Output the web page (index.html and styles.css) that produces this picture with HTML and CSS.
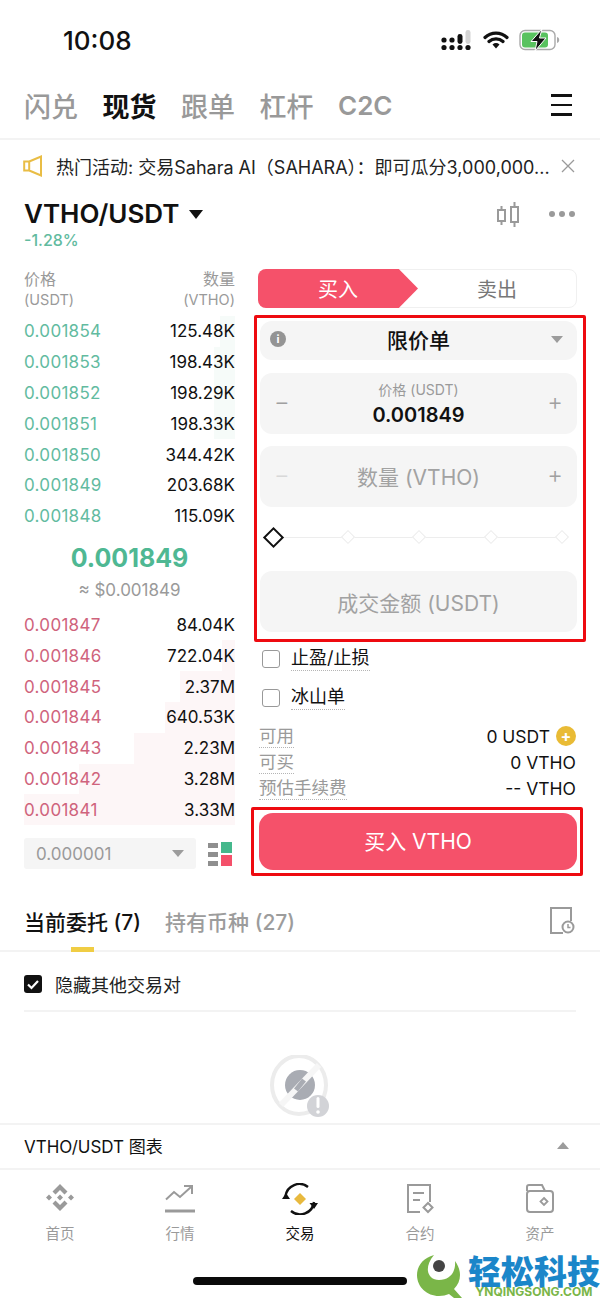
FILE: index.html
```html
<!DOCTYPE html>
<html lang="zh-CN">
<head>
    <meta charset="UTF-8">
    <meta name="viewport" content="width=device-width, initial-scale=1.0">
    <title>VTHO/USDT 现货交易</title>
    <link rel="stylesheet" href="styles.css">
</head>
<body>
<div class="page">
    <header class="status-bar">
        <span class="time">10:08</span>
        <div class="status-icons">
            <svg width="32" height="22" viewBox="0 0 32 22">
                <g fill="#111">
                    <circle cx="3" cy="11" r="2.600"/><circle cx="3" cy="18.500" r="2.600"/>
                    <circle cx="11" cy="11" r="2.600"/><circle cx="11" cy="18.500" r="2.600"/>
                    <rect x="16.500" y="5" width="5" height="10" rx="2.400"/><circle cx="19" cy="18.500" r="2.600"/>
                    <circle cx="27" cy="18.500" r="2.600"/>
                </g>
                <rect x="24.500" y="1" width="5" height="14" rx="2.400" fill="#d4d4d4"/>
            </svg>
            <svg width="26" height="20" viewBox="0 0 26 20">
                <path d="M2 7.500a16 16 0 0 1 22 0M6 11.500a10.500 10.500 0 0 1 14 0" fill="none" stroke="#111" stroke-width="3.200" stroke-linecap="round"/>
                <path d="M9.500 14.500a5.500 5.500 0 0 1 7 0L13 18.600z" fill="#111"/>
            </svg>
            <svg width="42" height="22" viewBox="0 0 42 22">
                <rect x="1" y="1.500" width="35" height="19" rx="5" fill="#fff" stroke="#a9a9a9" stroke-width="1.400"/>
                <rect x="3" y="3.500" width="26" height="15" rx="3" fill="#59c25f"/>
                <path d="M38 8v6c1.600-.4 2.200-1.600 2.200-3s-.6-2.600-2.200-3z" fill="#a9a9a9"/>
                <path d="M23 0 12 12.500h6L16 22l11-13h-6.500z" fill="#111" stroke="#fff" stroke-width="1"/>
            </svg>
        </div>
    </header>

    <nav class="top-tabs">
        <a>闪兑</a>
        <a class="active">现货</a>
        <a>跟单</a>
        <a>杠杆</a>
        <a class="latin">C2C</a>
        <span class="menu"><i></i><i></i><i></i></span>
    </nav>

    <div class="notice">
        <svg width="20" height="22" viewBox="0 0 20 22">
            <path d="M1.200 6.500h5v9h-5zM6.200 6.500l11.800-5v19l-11.800-5" fill="none" stroke="#e9bd45" stroke-width="2"/>
        </svg>
        <span class="notice-text">热门活动: 交易Sahara AI（SAHARA）：即可瓜分3,000,000...</span>
        <svg class="notice-close" width="14" height="14" viewBox="0 0 14 14">
            <path d="M1 1l12 12M13 1L1 13" stroke="#9a9a9a" stroke-width="1.300"/>
        </svg>
    </div>

    <section class="pair">
        <div class="pair-left">
            <div class="pair-name">VTHO/USDT <span class="caret-down"></span></div>
            <div class="pair-change">-1.28%</div>
        </div>
        <div class="pair-tools">
            <svg width="24" height="28" viewBox="0 0 24 28">
                <g fill="none" stroke="#9a9a9a" stroke-width="2">
                    <rect x="2" y="9" width="7" height="11"/><rect x="15" y="6" width="7" height="15"/>
                    <path d="M5.500 5v4M5.500 20v4M18.500 1v5M18.500 21v5"/>
                </g>
            </svg>
            <span class="dots"><i></i><i></i><i></i></span>
        </div>
    </section>

    <main class="trade">
        <section class="book">
            <div class="book-head">
                <div>价格<br><small>(USDT)</small></div>
                <div class="right">数量<br><small>(VTHO)</small></div>
            </div>
            <div class="book-rows bids">
                <div class="row"><span class="depth" style="width:7%"></span><span class="price">0.001854</span><span>125.48K</span></div>
                <div class="row"><span class="depth" style="width:10%"></span><span class="price">0.001853</span><span>198.43K</span></div>
                <div class="row"><span class="depth" style="width:10%"></span><span class="price">0.001852</span><span>198.29K</span></div>
                <div class="row"><span class="depth" style="width:10%"></span><span class="price">0.001851</span><span>198.33K</span></div>
                <div class="row"><span class="price">0.001850</span><span>344.42K</span></div>
                <div class="row"><span class="price">0.001849</span><span>203.68K</span></div>
                <div class="row"><span class="price">0.001848</span><span>115.09K</span></div>
            </div>
            <div class="mid">
                <div class="mid-price">0.001849</div>
                <div class="mid-usd">≈ $0.001849</div>
            </div>
            <div class="book-rows asks">
                <div class="row"><span class="price">0.001847</span><span>84.04K</span></div>
                <div class="row"><span class="depth" style="width:6%"></span><span class="price">0.001846</span><span>722.04K</span></div>
                <div class="row"><span class="depth" style="width:26%"></span><span class="price">0.001845</span><span>2.37M</span></div>
                <div class="row"><span class="depth" style="width:33%"></span><span class="price">0.001844</span><span>640.53K</span></div>
                <div class="row"><span class="depth" style="width:48%"></span><span class="price">0.001843</span><span>2.23M</span></div>
                <div class="row"><span class="depth" style="width:74%"></span><span class="price">0.001842</span><span>3.28M</span></div>
                <div class="row"><span class="depth" style="width:100%"></span><span class="price">0.001841</span><span>3.33M</span></div>
            </div>
            <div class="book-foot">
                <div class="step">0.000001<span class="caret-small"></span></div>
                <svg width="24" height="24" viewBox="0 0 24 24">
                    <g fill="#8f8f8f"><rect x="0" y="1" width="10" height="5"/><rect x="0" y="10" width="10" height="5"/><rect x="0" y="19" width="10" height="5"/></g>
                    <rect x="13" y="0" width="11" height="11" fill="#45b88c"/>
                    <rect x="13" y="13" width="11" height="11" fill="#f4506a"/>
                </svg>
            </div>
        </section>

        <section class="order">
            <div class="side-switch">
                <div class="side buy">买入</div>
                <div class="side sell">卖出</div>
            </div>
            <div class="highlight form-box">
                <div class="field type">
                    <span class="info">i</span>
                    <span>限价单</span>
                    <span class="caret-small"></span>
                </div>
                <div class="field stepper">
                    <span class="op">−</span>
                    <div class="stepper-mid">
                        <small>价格 (USDT)</small>
                        <strong>0.001849</strong>
                    </div>
                    <span class="op">+</span>
                </div>
                <div class="field stepper">
                    <span class="op faint">−</span>
                    <div class="placeholder">数量 (VTHO)</div>
                    <span class="op">+</span>
                </div>
                <div class="slider">
                    <i class="knob"></i><i></i><i></i><i></i><i></i>
                </div>
                <div class="field total placeholder">成交金额 (USDT)</div>
            </div>
            <label class="check first"><span class="box"></span><span class="dotted">止盈/止损</span></label>
            <label class="check"><span class="box"></span><span class="dotted">冰山单</span></label>
            <div class="info-rows">
                <div class="info-row"><span class="dotted">可用</span><span class="val">0 USDT <span class="plus">+</span></span></div>
                <div class="info-row"><span class="dotted">可买</span><span class="val">0 VTHO</span></div>
                <div class="info-row"><span class="dotted">预估手续费</span><span class="val">-- VTHO</span></div>
            </div>
            <div class="highlight buy-box">
                <button class="buy-btn">买入 VTHO</button>
            </div>
        </section>
    </main>

    <section class="orders">
        <div class="orders-tabs">
            <a class="active">当前委托 (7)</a>
            <a>持有币种 (27)</a>
            <svg class="history" width="26" height="28" viewBox="0 0 26 28">
                <path d="M14 26H2V1h20v13" fill="none" stroke="#9a9a9a" stroke-width="2"/>
                <circle cx="19" cy="20" r="5.500" fill="#fff" stroke="#9a9a9a" stroke-width="2"/>
                <path d="M19 17v3.500h2.500" fill="none" stroke="#9a9a9a" stroke-width="1.500"/>
            </svg>
        </div>
        <div class="hide-pairs">
            <span class="checked">
                <svg width="18" height="18" viewBox="0 0 18 18"><path d="M4 9.500l3.500 3.500L14 6" fill="none" stroke="#fff" stroke-width="2.200"/></svg>
            </span>
            隐藏其他交易对
        </div>
        <div class="empty">
            <svg width="62" height="64" viewBox="0 0 62 64">
                <ellipse cx="30" cy="30" rx="27" ry="29" fill="none" stroke="#ececec" stroke-width="4"/>
                <circle cx="31" cy="30" r="15" fill="#a9acb3"/>
                <path d="M12 50 50 10" stroke="#f6f6f6" stroke-width="6"/>
                <path d="M27 35 35 25" stroke="#a9acb3" stroke-width="5"/>
                <circle cx="49" cy="51" r="11" fill="#d2d3d7"/>
                <rect x="47.500" y="42" width="3" height="11" rx="1.500" fill="#fff"/>
                <circle cx="49" cy="57" r="1.800" fill="#fff"/>
            </svg>
        </div>
    </section>

    <div class="chart-bar">
        <span>VTHO/USDT 图表</span>
        <span class="caret-up"></span>
    </div>

    <nav class="bottom-nav">
        <a>
            <svg width="32" height="32" viewBox="0 0 32 32" fill="#9a9a9a">
                <path d="M16 1l7.500 7.500-3 3L16 7l-4.500 4.500-3-3zM5 11.500l3 3-3 3-3-3zM27 11.500l3 3-3 3-3-3zM16 11.500l3 3-3 3-3-3zM8.500 20.500l3-3L16 22l4.500-4.500 3 3L16 28z"/>
            </svg>
            <span>首页</span>
        </a>
        <a>
            <svg width="32" height="32" viewBox="0 0 32 32" fill="none" stroke="#9a9a9a" stroke-width="2">
                <path d="M2 16.500l8-7.500 6 5 11-10M20 3h8v8"/>
                <path d="M1 28h30" stroke-width="3"/>
            </svg>
            <span>行情</span>
        </a>
        <a class="active">
            <svg width="36" height="32" viewBox="0 0 36 32">
                <path d="M3.500 13A14 14 0 0 1 26 4M32 19A14 14 0 0 1 9 28" fill="none" stroke="#111" stroke-width="2.400"/>
                <path d="M0 14l4-6 4 6zM27.500 18l4.500 6 4-6z" fill="#111" transform="translate(0 2)"/>
                <path d="M18 10l6 6-6 6-6-6z" fill="#e8b93e"/>
            </svg>
            <span>交易</span>
        </a>
        <a>
            <svg width="32" height="32" viewBox="0 0 32 32" fill="none" stroke="#9a9a9a" stroke-width="2">
                <path d="M16 29H4V2h22v17"/>
                <path d="M9 10h11M9 17h7"/>
                <path d="M24 20l4.500 4.500L24 29l-4.500-4.500z"/>
            </svg>
            <span>合约</span>
        </a>
        <a>
            <svg width="32" height="32" viewBox="0 0 32 32" fill="none" stroke="#9a9a9a" stroke-width="2">
                <path d="M3 8V4a2 2 0 0 1 2-2h13l3 6"/>
                <rect x="3" y="8" width="26" height="21" rx="3"/>
                <path d="M20 15l3.500 3.500L20 22l-3.500-3.500z" stroke-width="1.800"/>
            </svg>
            <span>资产</span>
        </a>
    </nav>

    <div class="home-bar"></div>

    <div class="watermark">
        <svg width="46" height="44" viewBox="0 0 46 44">
            <path d="M17 1C6 4 0 12 0 21c0 12 10 21 22 21 4 0 7-1 10-2l5 4h8l-8-9c4-4 6-9 6-14 0-5-2-10-5-14 1 11-5 19-16 19C11 26 6 14 17 1z" fill="#7ab648"/>
            <circle cx="22" cy="12" r="6" fill="#444"/>
        </svg>
        <div class="wm-text">
            <b>轻松科技</b>
            <small>YNQINGSONG.COM</small>
        </div>
    </div>
</div>
</body>
</html>
```

FILE: styles.css
```css
:root {
    --text-color: #111111;
    --muted: #9a9a9a;
    --green: #62bb9f;
    --red: #cf637c;
    --buy: #f5516a;
    --field: #f5f5f5;
    --line: #f3f3f3;
    --highlight: #ee0a10;
}

* {
    box-sizing: border-box;
}

body {
    margin: 0;
    font-family: Inter, "Noto Sans CJK SC", sans-serif;
    color: var(--text-color);
    background: #ffffff;
}

.page {
    position: relative;
    width: 600px;
    height: 1298px;
    overflow: hidden;
}

.status-bar {
    display: flex;
    justify-content: space-between;
    align-items: center;
    height: 78px;
    padding: 2px 39px 0 63px;
}

.time {
    font-size: 26px;
    font-weight: 500;
}

.status-icons {
    display: flex;
    align-items: center;
    gap: 10px;
}

.top-tabs {
    display: flex;
    align-items: center;
    gap: 24.500px;
    height: 62px;
    padding: 0 28px 6px 24px;
    border-bottom: 2px solid var(--line);
    font-size: 27px;
    font-weight: 500;
    color: #999999;
}

.top-tabs .active {
    color: var(--text-color);
    font-weight: 700;
}

.top-tabs .latin {
    font-size: 26px;
    font-weight: 600;
}

.menu {
    display: flex;
    flex-direction: column;
    gap: 7px;
    margin-left: auto;
    width: 21px;
}

.menu i {
    display: block;
    height: 2.500px;
    background: var(--text-color);
}

.notice {
    display: flex;
    align-items: center;
    height: 49px;
    padding: 2px 25px 0 23px;
}

.notice-text {
    margin-left: 13px;
    font-size: 18px;
    color: #222222;
    white-space: nowrap;
    flex: 1;
}

.pair {
    display: flex;
    justify-content: space-between;
    padding: 9px 25px 0 24px;
    height: 78px;
}

.pair-name {
    font-size: 26px;
    font-weight: 600;
    line-height: 32px;
}

.caret-down {
    display: inline-block;
    margin-left: 3px;
    vertical-align: 4px;
    border: 7px solid transparent;
    border-top: 9px solid var(--text-color);
    border-bottom: 0;
}

.pair-change {
    font-size: 16px;
    font-weight: 500;
    color: var(--green);
}

.pair-tools {
    display: flex;
    align-items: flex-start;
    gap: 29px;
    padding-top: 3px;
}

.dots {
    display: flex;
    gap: 4px;
    padding-top: 10px;
}

.dots i {
    width: 6px;
    height: 6px;
    border-radius: 50%;
    background: var(--muted);
}

.trade {
    display: flex;
    height: 608px;
    padding-top: 2px;
}

.book {
    width: 251px;
    padding-left: 24px;
    padding-right: 16px;
}

.book-head {
    display: flex;
    justify-content: space-between;
    font-size: 16px;
    line-height: 20px;
    color: var(--muted);
}

.book-head small {
    font-size: 14.500px;
}

.book-head .right {
    text-align: right;
}

.book-rows {
    display: flex;
    flex-direction: column;
}

.bids {
    margin-top: 6px;
}

.row {
    position: relative;
    display: flex;
    justify-content: space-between;
    align-items: center;
    height: 30.800px;
    font-size: 17px;
}

.row span {
    position: relative;
}

.row .price {
    letter-spacing: 0.300px;
}

.row .depth {
    position: absolute;
    top: 0;
    right: 0;
    bottom: 0;
}

.bids .depth {
    background: #f6fbf9;
}

.asks .depth {
    background: #fdf6f7;
}

.bids .price {
    color: var(--green);
}

.asks .price {
    color: var(--red);
}

.mid {
    text-align: center;
    height: 78px;
    padding-top: 9px;
}

.mid-price {
    font-size: 25px;
    font-weight: 700;
    color: #4fb893;
    line-height: 34px;
}

.mid-usd {
    margin-top: 5px;
    font-size: 17px;
    color: var(--muted);
}

.book-foot {
    display: flex;
    justify-content: space-between;
    align-items: center;
    margin-top: 13px;
    padding-right: 3px;
}

.step {
    display: flex;
    justify-content: space-between;
    align-items: center;
    width: 172px;
    height: 31px;
    padding: 0 12px;
    background: var(--field);
    border-radius: 3px;
    font-size: 17px;
    color: var(--muted);
}

.caret-small {
    display: inline-block;
    border: 6px solid transparent;
    border-top: 7px solid #9c9c9c;
    border-bottom: 0;
}

.order {
    width: 349px;
    display: flex;
    flex-direction: column;
}

.side-switch {
    display: flex;
    flex: none;
    width: 319px;
    height: 39px;
    margin-left: 7px;
    border: 1px solid #f0f0f0;
    border-radius: 8px;
    font-size: 20px;
}

.side {
    display: flex;
    align-items: center;
    justify-content: center;
}

.buy {
    width: 160px;
    margin: -1px 0 -1px -1px;
    background: var(--buy);
    color: #ffffff;
    border-radius: 8px 0 0 8px;
    clip-path: polygon(0 0, 88% 0, 100% 50%, 88% 100%, 0 100%);
}

.sell {
    flex: 1;
    color: #777777;
}

.highlight {
    flex: none;
    border: 3px solid var(--highlight);
    border-radius: 2px;
}

.form-box {
    display: flex;
    flex-direction: column;
    width: 332px;
    height: 327px;
    margin: 7px 0 0 3px;
    padding: 3px 6px 6px 3px;
}

.field {
    display: flex;
    flex: none;
    align-items: center;
    justify-content: space-between;
    background: var(--field);
    border-radius: 12px;
}

.type {
    height: 39px;
    padding: 0 14px 3px 10px;
    font-size: 21px;
    font-weight: 500;
}

.info {
    display: flex;
    align-items: center;
    justify-content: center;
    width: 16px;
    height: 16px;
    border-radius: 50%;
    background: #949494;
    color: #ffffff;
    font-size: 11px;
    font-weight: 700;
}

.stepper {
    height: 61px;
    margin-top: 13px;
    padding: 0 14px;
}

.stepper + .stepper {
    margin-top: 12px;
}

.op {
    margin-bottom: 4px;
    font-size: 24px;
    font-weight: 300;
    color: #a0a0a0;
}

.op.faint {
    color: #d8d8d8;
}

.stepper-mid {
    display: flex;
    flex-direction: column;
    align-items: center;
    line-height: 1;
}

.stepper-mid small {
    font-size: 14px;
    color: var(--muted);
}

.stepper-mid strong {
    margin-top: 8px;
    font-size: 20px;
    font-weight: 600;
}

.placeholder {
    margin-bottom: 2px;
    font-size: 21px;
    color: #a2a2a2;
}

.slider {
    display: flex;
    flex: none;
    justify-content: space-between;
    align-items: center;
    height: 60px;
    margin-bottom: 4px;
    padding: 0 10px 0 6px;
    background: linear-gradient(#ededed, #ededed) center / 90% 1px no-repeat;
}

.slider i {
    width: 10px;
    height: 10px;
    background: #ffffff;
    border: 1px solid #ececec;
    transform: rotate(45deg);
}

.slider .knob {
    width: 15px;
    height: 15px;
    border: 2px solid #111111;
}

.total {
    justify-content: center;
    height: 61px;
    margin-bottom: 0;
}

.check {
    display: flex;
    flex: none;
    align-items: center;
    gap: 11px;
    height: 39px;
    margin-left: 11px;
    font-size: 18px;
}

.check.first {
    margin-top: -3px;
}

.box {
    width: 18px;
    height: 18px;
    border: 1.500px solid #999999;
    border-radius: 3px;
}

.dotted {
    border-bottom: 1px dotted #b5b5b5;
    line-height: 24px;
}

.info-rows {
    display: flex;
    flex: none;
    flex-direction: column;
    margin: 6px 24px 0 8px;
}

.info-row {
    display: flex;
    justify-content: space-between;
    align-items: center;
    height: 26px;
    font-size: 17.500px;
}

.info-row .dotted {
    color: var(--muted);
    line-height: 22px;
}

.val {
    display: flex;
    align-items: center;
    gap: 6px;
}

.plus {
    display: flex;
    align-items: center;
    justify-content: center;
    width: 20px;
    height: 20px;
    border-radius: 50%;
    background: #e9bb35;
    color: #ffffff;
    font-size: 16px;
    font-weight: 700;
}

.buy-box {
    width: 332px;
    height: 69px;
    margin-top: 6px;
    padding: 3px 3px 3px 5px;
}

.buy-btn {
    width: 100%;
    height: 100%;
    padding-bottom: 5px;
    border: 0;
    border-radius: 14px;
    background: var(--buy);
    color: #ffffff;
    font-family: inherit;
    font-size: 21px;
}

.orders {
    height: 248px;
    overflow: hidden;
}

.orders-tabs {
    display: flex;
    align-items: center;
    gap: 24px;
    height: 77px;
    padding: 17px 25px 0 24px;
    border-bottom: 2px solid var(--line);
    font-size: 21px;
    color: #9c9c9c;
    font-weight: 500;
}

.orders-tabs .active {
    position: relative;
    align-self: stretch;
    display: flex;
    align-items: center;
    color: var(--text-color);
}

.orders-tabs .active::after {
    content: "";
    position: absolute;
    left: 47px;
    bottom: -2px;
    width: 23px;
    height: 5px;
    background: #f0cd44;
}

.history {
    margin-left: auto;
}

.hide-pairs {
    display: flex;
    align-items: center;
    gap: 13px;
    height: 60px;
    margin: 0 24px;
    padding-top: 6px;
    border-bottom: 2px solid var(--line);
    font-size: 18px;
    color: #222222;
}

.checked {
    display: flex;
    width: 18px;
    height: 18px;
    border-radius: 3px;
    background: #111111;
}

.empty {
    display: flex;
    justify-content: center;
    padding: 43px 0 0 0;
}

.chart-bar {
    display: flex;
    justify-content: space-between;
    align-items: center;
    height: 47px;
    padding: 0 31px 2px 24px;
    border-top: 2px solid var(--line);
    border-bottom: 2px solid var(--line);
    font-size: 17px;
}

.caret-up {
    border: 6px solid transparent;
    border-bottom: 7px solid #9c9c9c;
    border-top: 0;
}

.bottom-nav {
    display: grid;
    grid-template-columns: repeat(5, 120px);
    padding-top: 13px;
}

.bottom-nav a {
    display: flex;
    flex-direction: column;
    align-items: center;
    gap: 7px;
    font-size: 14.500px;
    color: var(--muted);
}

.bottom-nav a.active {
    color: var(--text-color);
}

.home-bar {
    position: absolute;
    left: 193px;
    top: 1277px;
    width: 214px;
    height: 8px;
    border-radius: 4px;
    background: #0a0a0a;
}

.watermark {
    position: absolute;
    left: 417px;
    top: 1254px;
    display: flex;
    gap: 5px;
    white-space: nowrap;
}

.wm-text {
    display: flex;
    flex-direction: column;
    align-items: center;
}

.wm-text b {
    font-size: 33px;
    line-height: 32px;
    color: #1b86c9;
    font-family: "Noto Sans CJK SC", sans-serif;
    font-weight: 900;
}

.wm-text small {
    font-size: 12px;
    font-weight: 700;
    color: #7ab648;
    line-height: 12px;
}
```
